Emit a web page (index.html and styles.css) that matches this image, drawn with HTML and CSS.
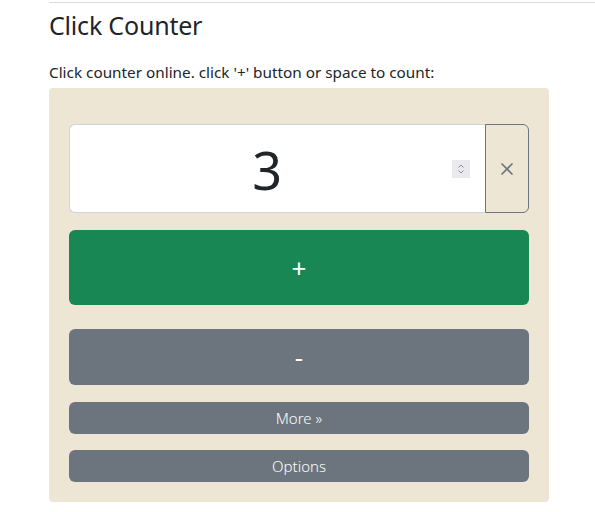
FILE: index.html
```html
<!DOCTYPE html>
<html>
<head>
<meta charset="utf-8">
<link rel="stylesheet" href="styles.css">
</head>
<body>
<div class="page">
  <hr class="rule">
  <h2 class="title">Click Counter</h2>
  <p class="lead">Click counter online. click '+' button or space to count:</p>
  <div class="panel">
    <div class="input-group">
      <div class="count-field">
        <span class="count-value">3</span>
        <span class="spinner">
          <svg width="18" height="18" viewBox="0 0 18 18">
            <path d="M6.5 7.5 L9 5 L11.5 7.5" fill="none" stroke="#8a8a96" stroke-width="1"/>
            <path d="M6.5 10.5 L9 13 L11.5 10.5" fill="none" stroke="#8a8a96" stroke-width="1"/>
          </svg>
        </span>
      </div>
      <button class="clear-btn">
        <svg width="14" height="14" viewBox="0 0 14 14">
          <path d="M1.5 1.5 L12.5 12.5 M12.5 1.5 L1.5 12.5" stroke="#6c757d" stroke-width="1.6" fill="none"/>
        </svg>
      </button>
    </div>
    <button class="btn btn-plus">+</button>
    <button class="btn btn-minus">-</button>
    <button class="btn btn-small btn-more">More »</button>
    <button class="btn btn-small btn-options">Options</button>
  </div>
</div>
</body>
</html>
```
FILE: styles.css
```css
html, body {
  margin: 0;
  padding: 0;
  background: #fff;
}
body {
  font-family: "Noto Sans", "Open Sans", sans-serif;
  color: #212529;
  overflow: hidden;
}
.page {
  padding-left: 49px;
  padding-top: 2px;
}
.rule {
  margin: 0;
  border: 0;
  border-top: 1px solid #dcdcdc;
}
.title {
  margin: 6px 0 0 0;
  font-size: 25px;
  font-weight: 400;
  line-height: 32px;
  letter-spacing: -0.2px;
}
.lead {
  margin: 19px 0 0 0;
  font-size: 15.3px;
  line-height: 24px;
}
.panel {
  margin-top: 4px;
  width: 460px;
  background: #ede6d4;
  border-radius: 4px;
  padding: 36px 20px 20px 20px;
  display: flex;
  flex-direction: column;
}
.input-group {
  display: flex;
  height: 89px;
}
.count-field {
  flex: 1;
  background: #fff;
  border: 1px solid #ced4da;
  border-right: 0;
  border-radius: 6px 0 0 6px;
  display: flex;
  align-items: center;
  padding: 0 15px 0 12px;
}
.count-value {
  flex: 1;
  text-align: center;
  font-size: 52px;
  font-weight: 400;
  line-height: 1;
  color: #212529;
  padding-top: 2px;
}
.spinner {
  width: 18px;
  height: 18px;
  background: #e9e9ee;
  display: flex;
}
.clear-btn {
  width: 44px;
  background: transparent;
  border: 1px solid #6c757d;
  border-radius: 0 6px 6px 0;
  display: flex;
  align-items: center;
  justify-content: center;
  padding: 0;
}
.btn {
  border: 0;
  color: #fff;
  font-family: "Noto Sans", "Open Sans", sans-serif;
  border-radius: 6px;
  width: 100%;
  padding: 0;
}
.btn-plus {
  margin-top: 17px;
  height: 75px;
  background: #198754;
  font-size: 26px;
}
.btn-minus {
  margin-top: 24px;
  height: 56px;
  background: #6c757d;
  font-size: 26px;
}
.btn-small {
  height: 32px;
  background: #6c757d;
  font-size: 15px;
  font-weight: 300;
}
.btn-more {
  margin-top: 17px;
}
.btn-options {
  margin-top: 16px;
}
```
